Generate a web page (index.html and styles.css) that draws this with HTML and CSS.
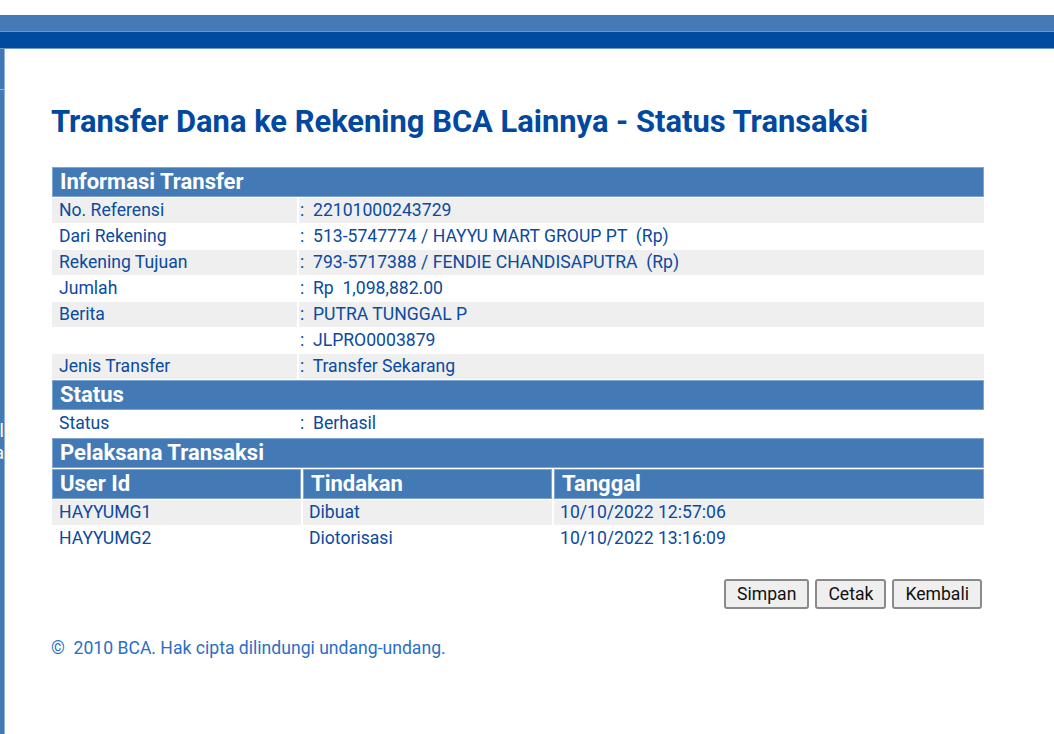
FILE: index.html
```html
<!DOCTYPE html>
<html>
<head>
<meta charset="utf-8">
<link rel="stylesheet" href="styles.css">
</head>
<body>
<div class="topbar">
  <div class="band-light"></div>
  <div class="band-dark"></div>
</div>
<div class="frame">
  <div class="side">
    <div class="side-top"></div>
    <div class="side-main">
      <span class="side-l">l</span>
      <span class="side-a">a</span>
    </div>
  </div>
  <div class="content">
    <h1 class="title">Transfer Dana ke Rekening BCA Lainnya - Status Transaksi</h1>
    <table class="grid">
      <colgroup><col class="c-label"><col></colgroup>
      <tr><th colspan="2" class="head">Informasi Transfer</th></tr>
      <tr class="odd"><td class="lbl">No. Referensi</td><td class="val">:&nbsp; 22101000243729</td></tr>
      <tr><td class="lbl">Dari Rekening</td><td class="val">:&nbsp; 513-5747774 / HAYYU MART GROUP PT &nbsp;(Rp)</td></tr>
      <tr class="odd"><td class="lbl">Rekening Tujuan</td><td class="val">:&nbsp; 793-5717388 / FENDIE CHANDISAPUTRA &nbsp;(Rp)</td></tr>
      <tr><td class="lbl">Jumlah</td><td class="val">:&nbsp; Rp &nbsp;1,098,882.00</td></tr>
      <tr class="odd"><td class="lbl">Berita</td><td class="val">:&nbsp; PUTRA TUNGGAL P</td></tr>
      <tr><td class="lbl"></td><td class="val">:&nbsp; JLPRO0003879</td></tr>
      <tr class="odd"><td class="lbl">Jenis Transfer</td><td class="val">:&nbsp; Transfer Sekarang</td></tr>
      <tr><th colspan="2" class="head">Status</th></tr>
      <tr><td class="lbl">Status</td><td class="val">:&nbsp; Berhasil</td></tr>
    </table>
    <table class="grid">
      <colgroup><col class="c-user"><col class="c-act"><col></colgroup>
      <tr><th colspan="3" class="head">Pelaksana Transaksi</th></tr>
      <tr><th class="head">User Id</th><th class="head">Tindakan</th><th class="head">Tanggal</th></tr>
      <tr class="odd"><td class="lbl">HAYYUMG1</td><td class="cell">Dibuat</td><td class="cell">10/10/2022 12:57:06</td></tr>
      <tr><td class="lbl">HAYYUMG2</td><td class="cell">Diotorisasi</td><td class="cell">10/10/2022 13:16:09</td></tr>
    </table>
    <div class="actions">
      <button class="btn">Simpan</button>
      <button class="btn">Cetak</button>
      <button class="btn">Kembali</button>
    </div>
    <p class="footer">©&nbsp; 2010 BCA. Hak cipta dilindungi undang-undang.</p>
  </div>
</div>
</body>
</html>
```
FILE: styles.css
```css
html, body {
  margin: 0;
  padding: 0;
  background: #ffffff;
  font-family: Roboto, "Liberation Sans", Arial, sans-serif;
  overflow: hidden;
}
.topbar {
  margin-top: 15px;
}
.band-light {
  height: 16px;
  background: #447bb6;
  border-bottom: 1px solid #6f98c8;
}
.band-dark {
  height: 16px;
  background: #004aa0;
  border-bottom: 1px solid #6f98c8;
}
.frame {
  display: flex;
  height: 685px;
}
.side {
  width: 4px;
  border-right: 1px solid #8fb1d8;
  display: flex;
  flex-direction: column;
  overflow: hidden;
}
.side-top {
  height: 40px;
  background: #3f78b4;
  border-bottom: 1px solid #8fb1d8;
}
.side-main {
  flex: 1;
  background: #437ab6;
  position: relative;
  overflow: hidden;
}
.side-l, .side-a {
  position: absolute;
  right: 0;
  color: #ffffff;
  font-size: 18px;
  line-height: 20px;
}
.side-l { top: 331px; }
.side-a { top: 353px; }
.content {
  flex: 1;
  padding: 0 0 0 46px;
}
.title {
  margin: 55px 0 26px 0;
  font-size: 30.9px;
  line-height: 36px;
  font-weight: 700;
  color: #0048a0;
}
.grid {
  width: 936px;
  table-layout: fixed;
  border-collapse: separate;
  border-spacing: 2px 1px;
  margin-left: -1px;
  font-size: 17.6px;
  color: #0a4aa0;
}
.c-label { width: 245px; }
.c-user { width: 249px; }
.c-act { width: 249px; }
th, td {
  box-sizing: border-box;
}
.head {
  background: #437ab6;
  color: #ffffff;
  font-size: 22px;
  font-weight: 700;
  text-align: left;
  height: 30px;
  padding: 0 0 0 7px;
  line-height: 28px;
  border: 1px solid #7ea4d0;
}
td {
  height: 25px;
  padding: 0;
  line-height: 25px;
  white-space: nowrap;
}
.lbl { padding-left: 7px; }
.val { padding-left: 1px; }
.cell { padding-left: 6px; }
.odd td { background: #efefef; }
.actions {
  display: flex;
  justify-content: flex-end;
  gap: 6px;
  width: 931px;
  margin-top: 27px;
}
.btn {
  font-family: Roboto, "Liberation Sans", Arial, sans-serif;
  font-size: 17.6px;
  color: #111111;
  background: #efefef;
  border: 2px solid #8a8a8a;
  border-radius: 3px;
  height: 30px;
  padding: 0 11px;
}
.footer {
  margin: 29px 0 0 0;
  font-size: 17.6px;
  color: #2a6fc4;
}
```
